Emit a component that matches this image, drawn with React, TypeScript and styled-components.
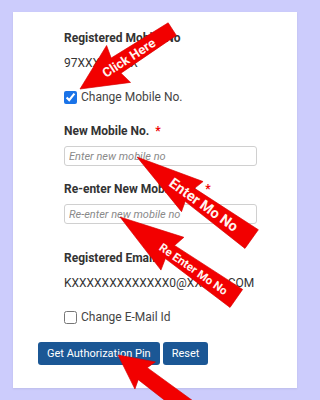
import React from 'react'
import styled, { createGlobalStyle } from 'styled-components'

const GlobalStyle = createGlobalStyle`
  html, body {
    margin: 0;
    padding: 0;
    background: #ccccfc;
  }
  body {
    font-family: Roboto, "Liberation Sans", Arial, sans-serif;
  }
`

type ArrowProps = {
  tipX: number
  tipY: number
  angle: number
  length: number
  head: number
  wing: number
  shaft: number
  shaftEnd: number
  label?: string
  labelAt?: number
  fontSize?: number
}

// red pointer arrow, tip at (tipX,tipY), tail along `angle`
const Arrow = ({ tipX, tipY, angle, length, head, wing, shaft, shaftEnd, label, labelAt = 0, fontSize = 12 }: ArrowProps) => {
  const pts = [
    [0, 0],
    [head, -wing],
    [head - 3, -shaft],
    [length, -shaftEnd],
    [length, shaftEnd],
    [head - 3, shaft],
    [head, wing],
  ].map(p => p.join(',')).join(' ')

  return (
    <g transform={`translate(${tipX} ${tipY}) rotate(${angle})`}>
      <polygon points={pts} fill="#f20000" stroke="#d60000" strokeWidth={0.6} />
      {label && (
        <text
          x={labelAt}
          y={0.5}
          dominantBaseline="central"
          textAnchor="middle"
          fill="#fff4f0"
          fontWeight={700}
          fontSize={fontSize}
          fontFamily='Roboto, "Liberation Sans", Arial, sans-serif'
        >
          {label}
        </text>
      )}
    </g>
  )
}

const App = () => {
  return (
    <S.Page>
      <GlobalStyle />
      <S.Card>
        <S.Fields>
          <S.Group>
            <S.Label>Registered Mobile No</S.Label>
            <S.Value>97XXXXXXXX</S.Value>
          </S.Group>

          <S.CheckRow $gap={18}>
            <S.Check type="checkbox" defaultChecked />
            <span>Change Mobile No.</span>
          </S.CheckRow>

          <S.Group $gap={18}>
            <S.Label>New Mobile No. <S.Star>*</S.Star></S.Label>
            <S.Input placeholder="Enter new mobile no" />
          </S.Group>

          <S.Group $gap={15}>
            <S.Label>Re-enter New Mobile No. <S.Star>*</S.Star></S.Label>
            <S.Input placeholder="Re-enter new mobile no" />
          </S.Group>

          <S.Group $gap={26}>
            <S.Label>Registered Email</S.Label>
            <S.Value>KXXXXXXXXXXXXX0@XXXXX.COM</S.Value>
          </S.Group>

          <S.CheckRow $gap={18}>
            <S.Check type="checkbox" />
            <span>Change E-Mail Id</span>
          </S.CheckRow>
        </S.Fields>

        <S.Actions>
          <S.Button>Get Authorization Pin</S.Button>
          <S.Button>Reset</S.Button>
        </S.Actions>
      </S.Card>

      <S.Overlay viewBox="0 0 310 400" width={310} height={400}>
        <Arrow tipX={80} tipY={89} angle={-33} length={110} head={46} wing={22} shaft={9} shaftEnd={7.5}
          label="Click Here" labelAt={58} fontSize={13} />
        <Arrow tipX={137} tipY={157} angle={35.6} length={141} head={68} wing={18.5} shaft={8} shaftEnd={11.5}
          label="Enter Mo No" labelAt={82} fontSize={14.5} />
        <Arrow tipX={120} tipY={217} angle={35} length={142} head={64} wing={20} shaft={8} shaftEnd={11}
          label="Re Enter Mo No" labelAt={90} fontSize={11.5} />
        <Arrow tipX={118} tipY={355} angle={37} length={90} head={34} wing={17} shaft={7.5} shaftEnd={8.5} />
      </S.Overlay>
    </S.Page>
  )
}

const S = {
  Page: styled.div`
    position: relative;
    width: 310px;
    height: 400px;
    box-sizing: border-box;
    padding: 12px 13px;
    background: #ccccfc;
  `,
  Card: styled.div`
    height: 376px;
    box-sizing: border-box;
    padding: 18px 25px 22px;
    background: #fff;
    box-shadow: 0 1px 2px rgba(0, 0, 0, 0.08);
  `,
  Fields: styled.div`
    display: flex;
    flex-direction: column;
    padding-left: 26px;
  `,
  Group: styled.div<{ $gap?: number }>`
    display: flex;
    flex-direction: column;
    margin-top: ${({ $gap }) => $gap ?? 0}px;
  `,
  Label: styled.div`
    font-size: 12px;
    font-weight: 700;
    line-height: 16px;
    color: #333;
  `,
  Star: styled.span`
    color: #e00;
    margin-left: 3px;
  `,
  Value: styled.div`
    margin-top: 9px;
    font-size: 12px;
    line-height: 16px;
    color: #333;
  `,
  CheckRow: styled.label<{ $gap?: number }>`
    display: flex;
    align-items: center;
    gap: 4px;
    margin-top: ${({ $gap }) => $gap ?? 0}px;
    font-size: 12px;
    line-height: 16px;
    color: #444;
  `,
  Check: styled.input`
    width: 13px;
    height: 13px;
    margin: 0;
    accent-color: #1a73e8;
  `,
  Input: styled.input`
    margin-top: 7px;
    width: 193px;
    height: 20px;
    box-sizing: border-box;
    padding: 0 4px;
    border: 1px solid #d0d0d0;
    border-radius: 3px;
    font-family: Roboto, "Liberation Sans", Arial, sans-serif;
    font-size: 11px;
    outline: none;
    &::placeholder {
      color: #8a8a8a;
      font-style: italic;
    }
  `,
  Actions: styled.div`
    display: flex;
    gap: 3px;
    margin-top: 17px;
  `,
  Button: styled.button`
    height: 23px;
    padding: 0 9px;
    border: none;
    border-radius: 3px;
    background: #1b5795;
    color: #fff;
    font-family: Roboto, "Liberation Sans", Arial, sans-serif;
    font-size: 11px;
  `,
  Overlay: styled.svg`
    position: absolute;
    top: 0;
    left: 0;
    pointer-events: none;
  `,
}

export default App
